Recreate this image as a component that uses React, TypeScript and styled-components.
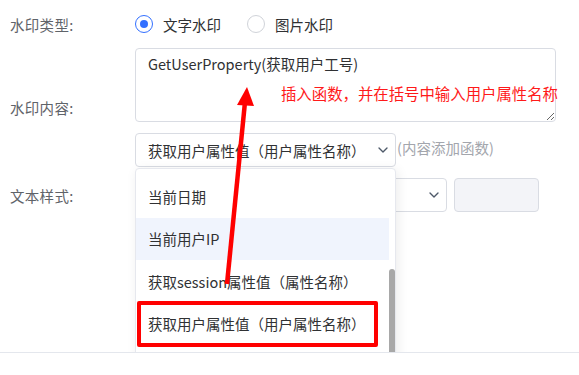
import React from "react";
import styled, { createGlobalStyle } from "styled-components";
import { ChevronDown } from "lucide-react";

const GlobalStyle = createGlobalStyle`
  body {
    margin: 0;
    background: #ffffff;
    font-family: "Noto Sans CJK SC", "Noto Sans", sans-serif;
  }
`;

const FUNCTIONS = [
  "当前日期",
  "当前用户IP",
  "获取session属性值（属性名称）",
  "获取用户属性值（用户属性名称）",
];

export default function App(): React.JSX.Element {
  return (
    <>
      <GlobalStyle />
      <StyledPage>
        <StyledBody>
          <StyledRow $height={48}>
            <StyledLabel>水印类型:</StyledLabel>
            <StyledRadioGroup>
              <StyledRadio>
                <StyledRadioCircle $checked />
                文字水印
              </StyledRadio>
              <StyledRadio>
                <StyledRadioCircle $checked={false} />
                图片水印
              </StyledRadio>
            </StyledRadioGroup>
          </StyledRow>

          <StyledRow>
            <StyledLabel>水印内容:</StyledLabel>
            <StyledColumn>
              <StyledTextareaWrap>
                <StyledTextarea
                  readOnly
                  defaultValue="GetUserProperty(获取用户工号)"
                />
                <StyledNote>插入函数，并在括号中输入用户属性名称</StyledNote>
              </StyledTextareaWrap>
              <StyledInline>
                <StyledSelect $width={261}>
                  <span>获取用户属性值（用户属性名称）</span>
                  <ChevronDown size={16} strokeWidth={2} color="#4e5969" />
                </StyledSelect>
                <StyledHint>(内容添加函数)</StyledHint>
              </StyledInline>
            </StyledColumn>
          </StyledRow>

          <StyledRow $height={34} $top={11}>
            <StyledLabel>文本样式:</StyledLabel>
            <StyledInline>
              <StyledSelect $width={312}>
                <span>微软雅黑</span>
                <ChevronDown size={16} strokeWidth={2} color="#4e5969" />
              </StyledSelect>
              <StyledDisabledInput />
            </StyledInline>
          </StyledRow>

          <StyledDropdown>
            {FUNCTIONS.map((name, i) => (
              <StyledOption key={name} $active={i === 1}>
                {name}
              </StyledOption>
            ))}
            <StyledThumb />
          </StyledDropdown>

          <StyledMarkBox />
          <StyledArrow width="579" height="353" viewBox="0 0 579 353">
            <line
              x1="227"
              y1="284"
              x2="245"
              y2="102"
              stroke="#ff0000"
              strokeWidth="4.5"
            />
            <polygon points="247,87 237,105 254,106" fill="#ff0000" />
          </StyledArrow>
        </StyledBody>
      </StyledPage>
    </>
  );
}

const StyledPage = styled.div`
  width: 579px;
  height: 375px;
  overflow: hidden;
  background: #ffffff;
`;

const StyledBody = styled.div`
  position: relative;
  height: 353px;
  box-sizing: border-box;
  padding-left: 10px;
  border-bottom: 1px solid #e4e7ed;
  overflow: hidden;
`;

const StyledRow = styled.div<{ $height?: number; $top?: number }>`
  display: flex;
  align-items: center;
  height: ${({ $height }) => ($height ? `${$height}px` : "auto")};
  margin-top: ${({ $top }) => ($top ? `${$top}px` : "0")};
`;

const StyledLabel = styled.div`
  width: 125px;
  flex-shrink: 0;
  font-size: 14.5px;
  color: #5f6369;
  letter-spacing: 0.3px;
`;

const StyledRadioGroup = styled.div`
  display: flex;
  gap: 26px;
`;

const StyledRadio = styled.label`
  display: flex;
  align-items: center;
  gap: 10px;
  font-size: 14.5px;
  color: #303133;
`;

const StyledRadioCircle = styled.span<{ $checked: boolean }>`
  width: 18px;
  height: 18px;
  box-sizing: border-box;
  border-radius: 50%;
  border: 1px solid ${({ $checked }) => ($checked ? "#3370ff" : "#d0d3d9")};
  display: flex;
  align-items: center;
  justify-content: center;

  &::after {
    content: "";
    width: 8px;
    height: 8px;
    border-radius: 50%;
    background: ${({ $checked }) => ($checked ? "#3370ff" : "transparent")};
  }
`;

const StyledColumn = styled.div`
  display: flex;
  flex-direction: column;
  gap: 11px;
`;

const StyledTextareaWrap = styled.div`
  position: relative;
  width: 421px;
  height: 74px;
`;

const StyledTextarea = styled.textarea`
  width: 100%;
  height: 100%;
  box-sizing: border-box;
  margin: 0;
  display: block;
  padding: 4px 12px;
  border: 1px solid #d9dce3;
  border-radius: 4px;
  font-family: "Noto Sans CJK SC", "Noto Sans", sans-serif;
  font-size: 14.5px;
  line-height: 22px;
  color: #303133;
  outline: none;
  resize: both;
`;

const StyledNote = styled.div`
  position: absolute;
  right: -2px;
  top: 34px;
  font-size: 15.4px;
  color: #ff1a1a;
  white-space: nowrap;
`;

const StyledInline = styled.div`
  display: flex;
  align-items: center;
  gap: 7px;
`;

const StyledSelect = styled.div<{ $width: number }>`
  width: ${({ $width }) => $width}px;
  height: 34px;
  box-sizing: border-box;
  padding: 0 4px 0 12px;
  border: 1px solid #d9dce3;
  border-radius: 4px;
  display: flex;
  align-items: center;
  justify-content: space-between;
  font-size: 14.5px;
  color: #303133;
  white-space: nowrap;
`;

const StyledHint = styled.span`
  margin-left: -6px;
  margin-top: -6px;
  font-size: 14.5px;
  color: #a3a6ad;
`;

const StyledDisabledInput = styled.div`
  width: 85px;
  height: 34px;
  box-sizing: border-box;
  border: 1px solid #d9dce3;
  border-radius: 4px;
  background: #f3f4f8;
`;

const StyledDropdown = styled.div`
  position: absolute;
  left: 135px;
  top: 168px;
  width: 261px;
  height: 220px;
  box-sizing: border-box;
  padding: 6px 6px 0 0;
  background: #ffffff;
  border: 1px solid #e6e8ee;
  border-radius: 4px;
  box-shadow: 2px 2px 12px rgba(0, 0, 0, 0.08);
  overflow: hidden;
`;

const StyledOption = styled.div<{ $active: boolean }>`
  height: 42.5px;
  padding-left: 12px;
  display: flex;
  align-items: center;
  font-size: 14.5px;
  color: #303133;
  white-space: nowrap;
  background: ${({ $active }) => ($active ? "#f0f4fd" : "transparent")};
`;

const StyledThumb = styled.div`
  position: absolute;
  right: 0;
  top: 100px;
  width: 6px;
  height: 140px;
  border-radius: 3px;
  background: #a8a8a8;
`;

const StyledMarkBox = styled.div`
  position: absolute;
  left: 137px;
  top: 301px;
  width: 241px;
  height: 46px;
  box-sizing: border-box;
  border: 4px solid #ff0000;
  border-radius: 2px;
`;

const StyledArrow = styled.svg`
  position: absolute;
  left: 0;
  top: 0;
  pointer-events: none;
`;
